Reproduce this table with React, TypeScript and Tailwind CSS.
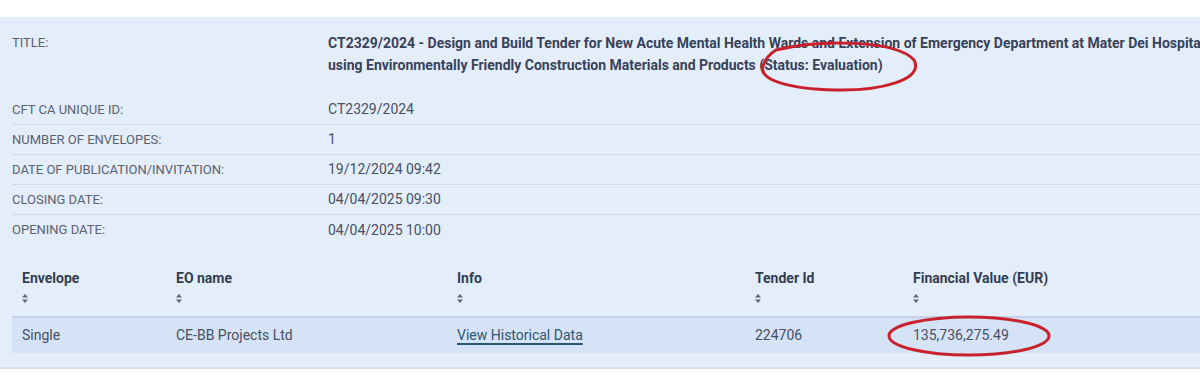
import React from 'react';

type Detail = { label: string; value: string };

const details: Detail[] = [
  { label: 'CFT CA Unique ID:', value: 'CT2329/2024' },
  { label: 'Number of envelopes:', value: '1' },
  { label: 'Date of publication/invitation:', value: '19/12/2024 09:42' },
  { label: 'Closing date:', value: '04/04/2025 09:30' },
  { label: 'Opening date:', value: '04/04/2025 10:00' },
];

const columns = [
  { title: 'Envelope', width: 'w-[154px]' },
  { title: 'EO name', width: 'w-[281px]' },
  { title: 'Info', width: 'w-[298px]' },
  { title: 'Tender Id', width: 'w-[158px]' },
  { title: 'Financial Value (EUR)', width: 'w-auto' },
];

// tiny up/down sort arrows under each column heading
const SortIcon = () => (
  <svg width="6" height="9" viewBox="0 0 6 9" className="block">
    <path d="M3 0 L6 3.6 H0 Z" fill="#5f6878" />
    <path d="M3 9 L6 5.4 H0 Z" fill="#5f6878" />
  </svg>
);

const App = () => {
  return (
    <div
      className="relative w-[1200px] h-[386px] overflow-hidden bg-white"
      style={{ fontFamily: 'Roboto, "Liberation Sans", sans-serif' }}
    >
      <div className="h-[17px]" />

      <div className="w-[1300px] bg-[#e4edfa] border-b-2 border-[#d8dde7]">
        {/* Tender details */}
        <div className="flex px-3 pt-[15px] h-[78px]">
          <div className="w-[316px] text-[13px] leading-[22px] text-[#5a6271] uppercase">Title:</div>
          <div className="text-[14px] leading-[22px] font-bold text-[#384259] whitespace-nowrap">
            CT2329/2024 - Design and Build Tender for New Acute Mental Health Wards and Extension of Emergency Department at Mater Dei Hospital
            <br />
            using Environmentally Friendly Construction Materials and Products (Status: Evaluation)
          </div>
        </div>

        {details.map((d, i) => (
          <div
            key={d.label}
            className={`mx-3 flex items-center h-[30px] ${i < details.length - 1 ? 'border-b border-[#cfd9e8]' : ''}`}
          >
            <div className="w-[316px] text-[13px] text-[#5a6271] uppercase">{d.label}</div>
            <div className="text-[14px] text-[#475064]">{d.value}</div>
          </div>
        ))}

        {/* Envelopes table */}
        <table className="mx-3 mt-[17px] mb-[14px] w-[1288px] table-fixed border-collapse">
          <thead>
            <tr className="border-b-2 border-[#c6d3e7]">
              {columns.map(c => (
                <th key={c.title} className={`${c.width} px-[10px] pt-[8px] pb-[10px] text-left align-top`}>
                  <div className="text-[14px] leading-[16px] font-bold text-[#333d53]">{c.title}</div>
                  <div className="h-[16px] flex items-center mt-[4px]">
                    <SortIcon />
                  </div>
                </th>
              ))}
            </tr>
          </thead>
          <tbody>
            <tr className="bg-[#d6e2f5] h-[36px] text-[14px] text-[#475064]">
              <td className="px-[10px]">Single</td>
              <td className="px-[10px]">CE-BB Projects Ltd</td>
              <td className="px-[10px]">
                <a href="#" className="text-[#2b5772] underline underline-offset-[3px] decoration-[1.5px]">
                  View Historical Data
                </a>
              </td>
              <td className="px-[10px]">224706</td>
              <td className="px-[10px]">135,736,275.49</td>
            </tr>
          </tbody>
        </table>
      </div>

      {/* red marker circles */}
      <svg className="absolute left-0 top-0 pointer-events-none" width="1200" height="386">
        <path
          d="M776 50 C 820 39, 896 40, 914 60 C 925 80, 880 91, 835 90 C 790 89, 758 80, 763 66 C 766 57, 771 53, 776 50 Z"
          fill="none"
          stroke="#c9212b"
          strokeWidth="3"
        />
        <ellipse cx="969" cy="336" rx="80" ry="19" fill="none" stroke="#c9212b" strokeWidth="3" />
      </svg>
    </div>
  );
};

export default App;
